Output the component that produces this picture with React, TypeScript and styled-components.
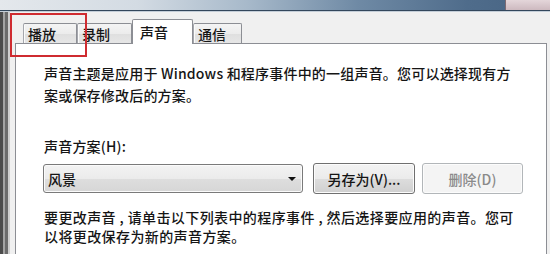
import React from 'react';
import styled, { createGlobalStyle } from 'styled-components';

const GlobalStyle = createGlobalStyle`
  html, body {
    margin: 0;
    padding: 0;
    width: 550px;
    height: 254px;
    overflow: hidden;
    background: #f0f0f0;
  }
  body {
    font-family: "Noto Sans CJK SC", "Noto Sans", sans-serif;
    font-size: 14px;
    font-weight: 500;
    color: #151515;
  }
`;

const SCWindow = styled.div`
  position: relative;
  width: 550px;
  height: 254px;
  display: flex;
  flex-direction: column;
  overflow: hidden;
`;

const SCTitleBar = styled.div`
  height: 10px;
  display: flex;
  background: linear-gradient(
    to right,
    #e4e8ec 0%,
    #d3dbe3 25%,
    #a7b9ca 45%,
    #6f8aa5 65%,
    #4f6c8b 85%,
    #466382 100%
  );
  border-bottom: 1px solid #33475c;
  box-shadow: 0 1px 0 #c4ced8;
`;

const SCTitleSpacer = styled.div`
  flex: 1;
`;

const SCCloseEdge = styled.div`
  width: 44px;
  background: linear-gradient(to bottom, #e4d6da, #cdb9bf);
  border-left: 1px solid #7d6a72;
`;

const SCBody = styled.div`
  flex: 1;
  display: flex;
  margin-top: 1px;
`;

const SCLeftFrame = styled.div`
  width: 10px;
  background: linear-gradient(
    to right,
    #4b4b4b 0px,
    #4b4b4b 3px,
    #a3a3a3 3px,
    #a3a3a3 5px,
    #6b6b6b 5px,
    #6b6b6b 8px,
    #cfcfcf 8px,
    #cfcfcf 10px
  );
`;

const SCDialog = styled.div`
  flex: 1;
  display: flex;
  flex-direction: column;
  padding: 0 3px 0 5px;
  background: #f0f0f0;
`;

const SCTabStrip = styled.div`
  height: 31px;
  display: flex;
  align-items: flex-end;
  padding-left: 8px;
`;

const SCTab = styled.div<{ $width: number; $active?: boolean }>`
  position: relative;
  z-index: ${(p) => (p.$active ? 1 : 0)};
  box-sizing: border-box;
  width: ${(p) => p.$width}px;
  height: ${(p) => (p.$active ? 25 : 20)}px;
  margin-bottom: ${(p) => (p.$active ? -1 : 0)}px;
  padding-left: ${(p) => (p.$active ? 7 : 4)}px;
  display: flex;
  align-items: center;
  border: 1px solid #8c8e94;
  border-bottom: none;
  border-left-color: ${(p) => (p.$active ? '#8c8e94' : '#a5a7ad')};
  border-radius: 2px 2px 0 0;
  background: ${(p) =>
    p.$active
      ? '#ffffff'
      : 'linear-gradient(to bottom, #f4f4f4 0%, #ececec 50%, #dfdfdf 51%, #e6e6e6 100%)'};
  box-shadow: ${(p) => (p.$active ? 'none' : 'inset 1px 0 0 #fbfbfb')};
  font-size: 14px;
  line-height: 16px;
  color: #151515;
  white-space: nowrap;
`;

const SCPanel = styled.div`
  flex: 1;
  background: #ffffff;
  border: 1px solid #8c8e94;
  border-bottom: none;
  padding: 18px 0 0 28px;
  display: flex;
  flex-direction: column;
  align-items: flex-start;
`;

const SCParagraph = styled.div<{ $lineHeight: number; $spacing: number }>`
  font-size: 14px;
  line-height: ${(p) => p.$lineHeight}px;
  letter-spacing: ${(p) => p.$spacing}px;
  white-space: nowrap;
`;

const SCLabel = styled.div`
  margin-top: 29px;
  font-size: 14px;
  line-height: 22px;
  letter-spacing: 0.2px;
`;

const SCControlRow = styled.div`
  margin-top: 6px;
  margin-left: -1px;
  display: flex;
  align-items: center;
  height: 31px;
`;

const SCSelect = styled.div`
  box-sizing: border-box;
  width: 260px;
  height: 29px;
  display: flex;
  align-items: center;
  justify-content: space-between;
  padding: 0 6px 0 4px;
  border: 1px solid #7a7a7a;
  border-radius: 3px;
  background: linear-gradient(to bottom, #f3f3f3 0%, #ebebeb 50%, #dedede 51%, #d6d6d6 100%);
  box-shadow: inset 0 0 0 1px #fbfbfb;
  font-size: 14px;
`;

const SCArrow = styled.span`
  width: 0;
  height: 0;
  border-left: 4px solid transparent;
  border-right: 4px solid transparent;
  border-top: 4px solid #111;
`;

const SCButton = styled.div<{ $disabled?: boolean; $width: number; $gap: number }>`
  box-sizing: border-box;
  width: ${(p) => p.$width}px;
  height: 31px;
  margin-left: ${(p) => p.$gap}px;
  display: flex;
  align-items: center;
  justify-content: center;
  border: 1px solid ${(p) => (p.$disabled ? '#b2b6b9' : '#707070')};
  border-radius: 3px;
  background: ${(p) =>
    p.$disabled
      ? '#f4f4f4'
      : 'linear-gradient(to bottom, #f3f3f3 0%, #ebebeb 50%, #dddddd 51%, #d0d0d0 100%)'};
  box-shadow: inset 0 0 0 1px #fcfcfc;
  color: ${(p) => (p.$disabled ? '#8a8a8a' : '#151515')};
  font-size: 14px;
  white-space: nowrap;
`;

const SCHint = styled(SCParagraph)`
  margin-top: 14px;
`;

const SCHighlight = styled.div`
  position: absolute;
  left: 10px;
  top: 13px;
  width: 77px;
  height: 44px;
  box-sizing: border-box;
  border: 2px solid #cf2b30;
  pointer-events: none;
`;

const tabs = [
  { label: '播放', width: 54 },
  { label: '录制', width: 55 },
  { label: '声音', width: 61, active: true },
  { label: '通信', width: 49 },
];

const App = () => {
  return (
    <SCWindow>
      <GlobalStyle />
      <SCTitleBar>
        <SCTitleSpacer />
        <SCCloseEdge />
      </SCTitleBar>
      <SCBody>
        <SCLeftFrame />
        <SCDialog>
          <SCTabStrip>
            {tabs.map((t) => (
              <SCTab key={t.label} $width={t.width} $active={t.active}>
                {t.label}
              </SCTab>
            ))}
          </SCTabStrip>
          <SCPanel>
            <SCParagraph $lineHeight={22} $spacing={0.2}>
              <div>声音主题是应用于 Windows 和程序事件中的一组声音。您可以选择现有方</div>
              <div>案或保存修改后的方案。</div>
            </SCParagraph>
            <SCLabel>声音方案(H):</SCLabel>
            <SCControlRow>
              <SCSelect>
                <span>风景</span>
                <SCArrow />
              </SCSelect>
              <SCButton $width={102} $gap={10}>
                另存为(V)...
              </SCButton>
              <SCButton $width={101} $gap={7} $disabled>
                删除(D)
              </SCButton>
            </SCControlRow>
            <SCHint $lineHeight={19} $spacing={0.4}>
              <div>要更改声音 , 请单击以下列表中的程序事件 , 然后选择要应用的声音。您可</div>
              <div>以将更改保存为新的声音方案。</div>
            </SCHint>
          </SCPanel>
        </SCDialog>
      </SCBody>
      <SCHighlight />
    </SCWindow>
  );
};

export default App;
